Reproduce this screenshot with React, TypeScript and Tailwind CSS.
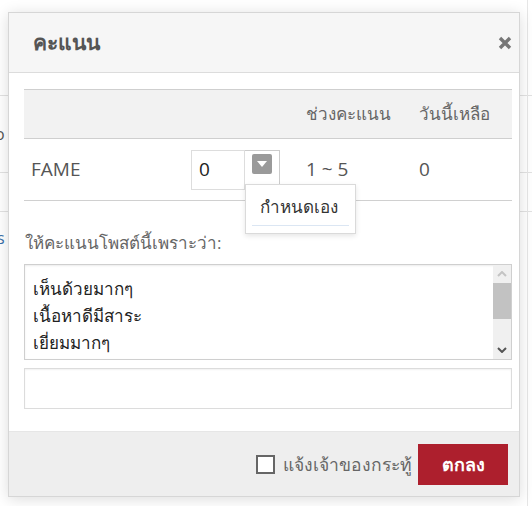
import { useState } from "react";

const reasons = ["เห็นด้วยมากๆ", "เนื้อหาดีมีสาระ", "เยี่ยมมากๆ", "ชอบมากๆ"];

function Backdrop() {
  return (
    <div className="absolute inset-0 overflow-hidden text-[#555]">
      <div className="mt-[95px] border-t border-[#e2e2e2]" />
      <div className="flex h-[76px] items-center pl-0 text-[16px]">
        <span className="-ml-[5px]">o</span>
      </div>
      <div className="border-t border-[#e2e2e2]" />
      <div className="h-[38px]" />
      <div className="border-t border-[#e2e2e2]" />
      <div className="-ml-[3px] mt-[14px] text-[16px] text-[#3a6fa8]">s</div>
      <div className="absolute right-[4px] top-0 h-full border-l border-[#e6e6e6]" />
    </div>
  );
}

export default function App() {
  const [notify, setNotify] = useState(false);

  return (
    <div
      className="relative h-[506px] w-[532px] bg-white"
      style={{ fontFamily: '"Open Sans", "Noto Sans", sans-serif' }}
    >
      <Backdrop />

      <div className="absolute left-[8px] top-[12px] flex w-[512px] flex-col border border-[#d6d6d6] bg-white shadow-[0_2px_14px_rgba(0,0,0,0.14)]">
        <div className="flex h-[60px] items-center justify-between border-b border-[#dcdcdc] bg-[#f6f6f6] pl-[24px] pr-[7px]">
          <h3 className="text-[21px] font-bold text-[#555]">คะแนน</h3>
          <button className="flex h-[14px] w-[14px] items-center justify-center">
            <svg width="14" height="14" viewBox="0 0 14 14">
              <path d="M2 2l10 10M12 2L2 12" stroke="#777" strokeWidth="3.4" />
            </svg>
          </button>
        </div>

        <div className="pl-[15px] pr-[7px] pt-[16px]">
          <div className="grid h-[50px] grid-cols-[282px_113px_1fr] items-center border-y border-[#cfcfcf] bg-[#f2f2f2] text-[17px] text-[#666]">
            <span />
            <span>ช่วงคะแนน</span>
            <span>วันนี้เหลือ</span>
          </div>

          <div className="grid h-[62px] grid-cols-[167px_115px_113px_1fr] items-center border-b border-[#d0d0d0] text-[19px] text-[#555]">
            <span className="pl-[7px]">FAME</span>
            <div className="relative flex h-[40px] items-start">
              <div className="flex h-[40px] w-[54px] items-center border border-[#ddd] pl-[7px] text-[#222]">0</div>
              <div className="flex h-[34px] w-[35px] items-start justify-center border-r border-t border-[#ccc] pt-[3px]">
                <div className="flex h-[20px] w-[20px] items-center justify-center rounded-[2px] bg-[#9a9a9a]">
                  <svg width="10" height="6" viewBox="0 0 10 6">
                    <path d="M0 0h10L5 6z" fill="#fff" />
                  </svg>
                </div>
              </div>
              <div className="absolute left-[54px] top-[34px] z-10 w-[111px] border border-[#dadada] bg-white px-[6px] pb-[7px] pt-[9px] shadow-[0_2px_5px_rgba(0,0,0,0.1)]">
                <div className="border-b border-[#dbe6f3] pb-[6px] pl-[8px] text-[17px] text-[#333]">กำหนดเอง</div>
              </div>
            </div>
            <span>1 ~ 5</span>
            <span>0</span>
          </div>

          <p className="mt-[29px] pl-[1px] text-[17px] leading-[26px] text-[#666]">ให้คะแนนโพสต์นี้เพราะว่า:</p>

          <div className="mt-[8px] flex h-[96px] border border-[#cfcfcf] shadow-[inset_0_1px_2px_rgba(0,0,0,0.08)]">
            <ul className="flex-1 overflow-hidden pl-[8px] pt-[10px] text-[17px] leading-[27px] text-[#222]">
              {reasons.map((r, i) => (
                <li key={r} className={i === 3 ? "text-[#c0392b]" : ""}>
                  {r}
                </li>
              ))}
            </ul>
            <div className="flex w-[18px] flex-col bg-[#f0f0f0]">
              <div className="flex h-[18px] items-center justify-center">
                <svg width="10" height="6" viewBox="0 0 10 6">
                  <path d="M1 5l4-4 4 4" stroke="#c4c4c4" strokeWidth="2" fill="none" />
                </svg>
              </div>
              <div className="h-[36px] bg-[#c2c2c2]" />
              <div className="flex-1" />
              <div className="flex h-[18px] items-center justify-center">
                <svg width="10" height="6" viewBox="0 0 10 6">
                  <path d="M1 1l4 4 4-4" stroke="#555" strokeWidth="2" fill="none" />
                </svg>
              </div>
            </div>
          </div>

          <div className="mt-[8px] h-[41px] border border-[#dcdcdc] shadow-[inset_0_1px_2px_rgba(0,0,0,0.06)]" />
        </div>

        <div className="mt-[22px] flex h-[65px] items-center justify-end gap-[6px] border-t border-[#e6e6e6] bg-[#eeeeee] pr-[11px]">
          <label className="flex items-center gap-[8px] text-[17.5px] text-[#666]">
            <button
              onClick={() => setNotify(!notify)}
              className="h-[19px] w-[19px] border-2 border-[#666] bg-white"
            />
            <span>แจ้งเจ้าของกระทู้</span>
          </label>
          <button className="h-[41px] w-[90px] bg-[#ad1f2d] text-[18px] font-bold text-white">ตกลง</button>
        </div>
      </div>
    </div>
  );
}
